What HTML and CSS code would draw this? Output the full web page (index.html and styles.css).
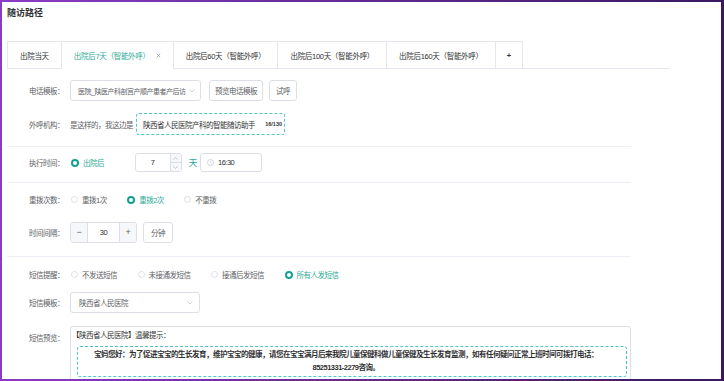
FILE: index.html
```html
<!DOCTYPE html>
<html lang="zh-CN">
<head>
  <meta charset="UTF-8">
  <title>随访路径</title>
  <link rel="stylesheet" href="styles.css">
</head>
<body>

<!-- 标题 -->
<div class="page-title">随访路径</div>

<!-- 标签页 -->
<div class="tabs">
  <div class="tab">出院当天</div>
  <div class="tab active">出院后7天（智能外呼）<svg class="tab-close" width="5" height="5" viewBox="0 0 5 5"><path d="M0.8 0.8 L4.2 4.2 M4.2 0.8 L0.8 4.2" stroke="#909399" stroke-width="0.7"/></svg></div>
  <div class="tab">出院后60天（智能外呼）</div>
  <div class="tab">出院后100天（智能外呼）</div>
  <div class="tab">出院后160天（智能外呼）</div>
  <div class="tab tab-add">+</div>
</div>

<div class="form">
  <!-- 电话模板 -->
  <div class="row row-1">
    <label class="label">电话模板：</label>
    <div class="select select-wide">
      <span class="select-text">医院_陕医产科剖宫产顺产患者产后访</span>
      <svg class="chevron" width="6" height="4" viewBox="0 0 6 4"><polyline points="0.5,0.5 3,3 5.5,0.5" fill="none" stroke="#c0c4cc" stroke-width="0.8"/></svg>
    </div>
    <button class="btn btn-preview">预览电话模板</button>
    <button class="btn btn-call">试呼</button>
  </div>

  <!-- 外呼机构 -->
  <div class="row row-2">
    <label class="label">外呼机构：</label>
    <span class="text">是这样的，我这边是</span>
    <div class="dashed-input">
      <span>陕西省人民医院产科的智能随访助手</span>
      <span class="count">16/130</span>
    </div>
  </div>

  <div class="divider div-1"></div>

  <!-- 执行时间 -->
  <div class="row row-3">
    <label class="label">执行时间：</label>
    <span class="radio checked"><i></i>出院后</span>
    <div class="number">
      <span class="number-value">7</span>
      <div class="spinner">
        <span><svg width="5" height="3" viewBox="0 0 5 3"><polyline points="0.5,2.5 2.5,0.5 4.5,2.5" fill="none" stroke="#a8abb2" stroke-width="0.7"/></svg></span>
        <span><svg width="5" height="3" viewBox="0 0 5 3"><polyline points="0.5,0.5 2.5,2.5 4.5,0.5" fill="none" stroke="#a8abb2" stroke-width="0.7"/></svg></span>
      </div>
    </div>
    <span class="unit">天</span>
    <div class="time">
      <svg class="clock" width="7" height="7" viewBox="0 0 7 7"><circle cx="3.5" cy="3.5" r="3" fill="none" stroke="#c0c4cc" stroke-width="0.7"/><polyline points="3.5,1.8 3.5,3.6 4.8,4.4" fill="none" stroke="#c0c4cc" stroke-width="0.7"/></svg>
      <span>16:30</span>
    </div>
  </div>

  <div class="divider div-2"></div>

  <!-- 重拨次数 -->
  <div class="row row-4">
    <label class="label">重拨次数：</label>
    <span class="radio"><i></i>重拨1次</span>
    <span class="radio checked"><i></i>重拨2次</span>
    <span class="radio"><i></i>不重拨</span>
  </div>

  <!-- 时间间隔 -->
  <div class="row row-5">
    <label class="label">时间间隔：</label>
    <div class="stepper">
      <span class="step">−</span>
      <span class="step-value">30</span>
      <span class="step">+</span>
    </div>
    <button class="btn btn-min">分钟</button>
  </div>

  <div class="divider div-3"></div>

  <!-- 短信提醒 -->
  <div class="row row-6">
    <label class="label">短信提醒：</label>
    <span class="radio"><i></i>不发送短信</span>
    <span class="radio"><i></i>未接通发短信</span>
    <span class="radio"><i></i>接通后发短信</span>
    <span class="radio checked"><i></i>所有人发短信</span>
  </div>

  <!-- 短信模板 -->
  <div class="row row-7">
    <label class="label">短信模板：</label>
    <div class="select">
      <span class="select-text">陕西省人民医院</span>
      <svg class="chevron" width="6" height="4" viewBox="0 0 6 4"><polyline points="0.5,0.5 3,3 5.5,0.5" fill="none" stroke="#c0c4cc" stroke-width="0.8"/></svg>
    </div>
  </div>

  <!-- 短信预览 -->
  <div class="row row-8">
    <label class="label">短信预览：</label>
    <div class="preview">
      <div class="preview-head">【陕西省人民医院】温馨提示：</div>
      <div class="preview-body">宝妈您好：为了促进宝宝的生长发育，维护宝宝的健康，请您在宝宝满月后来我院儿童保健科做儿童保健及生长发育监测，如有任何疑问正常上班时间可拨打电话：85251331-2279咨询。</div>
    </div>
  </div>
</div>

</body>
</html>
```

FILE: styles.css
```css
html {
  margin: 0;
}

body {
  margin: 0;
  width: 724px;
  height: 381px;
  box-sizing: border-box;
  overflow: hidden;
  background: #fff;
  border-style: solid;
  border-width: 2px 3px 2px 2px;
  border-image: linear-gradient(90deg, #8a3bc6, #3a1862) 1;
  padding-left: 5px;
  font-family: "Liberation Sans", "Noto Sans CJK SC", sans-serif;
  font-size: 7.5px;
  letter-spacing: -0.5px;
  color: #606266;
}

.page-title {
  height: 22px;
  line-height: 22px;
  margin-bottom: 17px;
  font-size: 9px;
  font-weight: bold;
  letter-spacing: 0;
  color: #303133;
}

/* 标签页 */
.tabs {
  display: flex;
  width: 663px;
  border-bottom: 1px solid #e4e7ed;
  letter-spacing: -0.3px;
}

.tab {
  display: flex;
  align-items: center;
  height: 26px;
  padding: 0 12px;
  border-top: 1px solid #e4e7ed;
  border-left: 1px solid #e4e7ed;
  margin-bottom: -1px;
  border-bottom: 1px solid transparent;
  color: #303133;
  white-space: nowrap;
}

.tab.active {
  color: #2eab98;
  border-bottom-color: #fff;
}

.tab-close {
  margin-left: 6px;
}

.tab-add {
  border-right: 1px solid #e4e7ed;
  padding: 0 11px;
  font-weight: bold;
}

/* 表单 */
.form {
  width: 624px;
}

.row {
  display: flex;
  align-items: center;
}

.label {
  width: 57px;
  padding-right: 6px;
  text-align: right;
  white-space: nowrap;
}

.row-1 { margin-top: 11px; height: 21px; }
.row-2 { margin-top: 12px; height: 22px; }
.row-3 { margin-top: 6px; height: 19px; }
.row-4 { margin-top: 7px; height: 19px; }
.row-5 { margin-top: 13px; height: 21px; }
.row-6 { margin-top: 8px; height: 19px; }
.row-7 { margin-top: 8px; height: 21px; }
.row-8 { margin-top: 13px; align-items: flex-start; }

.divider {
  height: 1px;
  background: #ebeef5;
}

.div-1 { margin-top: 11px; }
.div-2 { margin-top: 10px; }
.div-3 { margin-top: 13px; }

.select {
  display: flex;
  align-items: center;
  justify-content: space-between;
  width: 130px;
  height: 21px;
  box-sizing: border-box;
  padding: 0 6px 0 8px;
  border: 1px solid #dcdfe6;
  border-radius: 3px;
}

.select-wide {
  width: 131px;
  padding-left: 7px;
  padding-right: 5px;
}

.select-wide .select-text {
  font-size: 7px;
}

.select-text {
  white-space: nowrap;
}

.btn {
  height: 21px;
  margin-left: 8px;
  padding: 0 6px;
  border: 1px solid #dcdfe6;
  border-radius: 3px;
  background: #fff;
  font: inherit;
  letter-spacing: inherit;
  color: #606266;
}

.btn-preview {
  padding: 0 5px;
}

.btn-call {
  margin-left: 6px;
  padding: 0 6px;
}

.btn-min {
  margin-left: 6px;
  padding: 0 7px;
}

.dashed-input {
  display: flex;
  align-items: center;
  justify-content: space-between;
  width: 149px;
  height: 22px;
  box-sizing: border-box;
  margin-left: 3px;
  padding: 0 2px 0 6px;
  border: 1px dashed #4fc6c6;
  border-radius: 3px;
  color: #303133;
}

.count {
  font-size: 5.5px;
  font-weight: bold;
  letter-spacing: 0;
}

/* 单选 */
.radio {
  display: flex;
  align-items: center;
  margin-left: 1px;
  margin-right: 19.5px;
  white-space: nowrap;
}

.radio i {
  width: 7px;
  height: 7px;
  box-sizing: border-box;
  margin-right: 4px;
  border: 1px solid #dcdfe6;
  border-radius: 50%;
  background: #fff;
}

.radio.checked {
  color: #2eab98;
}

.radio.checked i {
  border: 2.2px solid #17a08f;
  background: #fff;
  width: 8px;
  height: 8px;
}

/* 数字输入 */
.number {
  display: flex;
  width: 47px;
  height: 19px;
  box-sizing: border-box;
  margin-left: 11px;
  border: 1px solid #dcdfe6;
  border-radius: 3px;
}

.number-value {
  flex: 1;
  line-height: 17px;
  text-align: center;
  color: #303133;
}

.spinner {
  display: flex;
  flex-direction: column;
  width: 10px;
  border-left: 1px solid #dcdfe6;
  background: #f5f7fa;
}

.spinner span {
  flex: 1;
  display: flex;
  align-items: center;
  justify-content: center;
}

.spinner span + span {
  border-top: 1px solid #dcdfe6;
}

.unit {
  margin-left: 7px;
  font-size: 9px;
  color: #2eab98;
}

.time {
  display: flex;
  align-items: center;
  width: 62px;
  height: 19px;
  box-sizing: border-box;
  margin-left: 3px;
  padding-left: 6px;
  border: 1px solid #dcdfe6;
  border-radius: 3px;
  color: #303133;
}

.clock {
  margin-right: 4px;
}

/* 步进器 */
.stepper {
  display: flex;
  width: 67px;
  height: 21px;
  box-sizing: border-box;
  border: 1px solid #dcdfe6;
  border-radius: 3px;
  overflow: hidden;
}

.step {
  width: 16px;
  line-height: 19px;
  text-align: center;
  background: #f5f7fa;
  color: #606266;
  font-size: 9px;
}

.step:first-child { border-right: 1px solid #dcdfe6; }
.step:last-child { border-left: 1px solid #dcdfe6; }

.step-value {
  flex: 1;
  line-height: 19px;
  text-align: center;
  color: #303133;
}

/* 短信预览 */
.row-8 .label {
  padding-top: 6px;
}

.preview {
  width: 561px;
  height: 60px;
  box-sizing: border-box;
  padding: 3px 3px 0 1px;
  border: 1px solid #dcdfe6;
  border-radius: 3px;
  color: #303133;
}

.preview-head {
  line-height: 11px;
}

.preview-body {
  margin: 5px 0 0 5px;
  padding: 1px 16px 2px 4px;
  border: 1px dashed #4fc6c6;
  border-radius: 3px;
  line-height: 13px;
  text-align: center;
  font-weight: bold;
}
```
